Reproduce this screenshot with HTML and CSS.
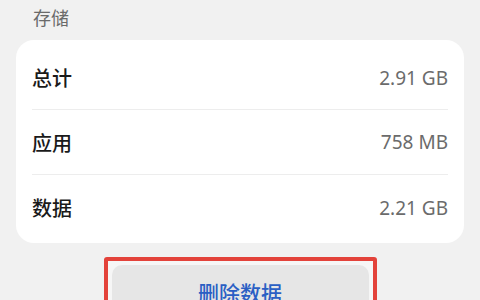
FILE: index.html
```html
<!DOCTYPE html>
<html lang="zh">
  <head>
    <meta charset="UTF-8" />
    <meta name="viewport" content="width=device-width, initial-scale=1.0" />
    <title>存储</title>
    <link rel="stylesheet" href="styles.css">
  </head>

  <body>
    <main class="page">
      <div class="section-title">存储</div>
      <div class="card">
        <div class="row">
          <span class="label">总计</span>
          <span class="value">2.91 GB</span>
        </div>
        <div class="row">
          <span class="label">应用</span>
          <span class="value">758 MB</span>
        </div>
        <div class="row">
          <span class="label">数据</span>
          <span class="value">2.21 GB</span>
        </div>
      </div>
      <div class="action">
        <div class="highlight">
          <button type="button" class="btn">删除数据</button>
        </div>
      </div>
    </main>
  </body>
</html>
```

FILE: styles.css
```css
body {
  font-family: "Noto Sans CJK SC", "Noto Sans", sans-serif;
  background-color: #f1f1f1;
  margin: 0;
  padding: 0;
  overflow: hidden;
}

.page {
  padding: 0 16px;
}

.section-title {
  height: 40px;
  padding: 3px 0 0 17px;
  box-sizing: border-box;
  font-size: 18px;
  font-weight: 400;
  line-height: 28px;
  color: #6a6a6a;
}

.card {
  background-color: #fff;
  border-radius: 18px;
  padding: 6px 16px 0;
  height: 203px;
  box-sizing: border-box;
}

.row {
  display: flex;
  justify-content: space-between;
  align-items: center;
  height: 65px;
  border-bottom: 1px solid #ededed;
  box-sizing: border-box;
}

.row:first-child {
  height: 64px;
}

.row:last-child {
  border-bottom: none;
}

.label {
  font-size: 20px;
  font-weight: 500;
  color: #1a1a1a;
}

.value {
  font-family: "Noto Sans", sans-serif;
  font-size: 19px;
  color: #6b6b6b;
}

.action {
  display: flex;
  justify-content: center;
  padding-top: 14px;
}

.highlight {
  border: 4px solid #e3423a;
  border-radius: 3px;
  padding: 4px 4px 0 4px;
  background-color: #f6f6f6;
}

.btn {
  display: block;
  width: 257px;
  height: 44px;
  border: none;
  border-radius: 10px 10px 0 0;
  background-color: #e6e6e6;
  color: #2a5fc4;
  font-family: inherit;
  font-size: 21px;
  font-weight: 500;
  line-height: 28px;
  padding: 10px 0 0;
  cursor: pointer;
}
```
